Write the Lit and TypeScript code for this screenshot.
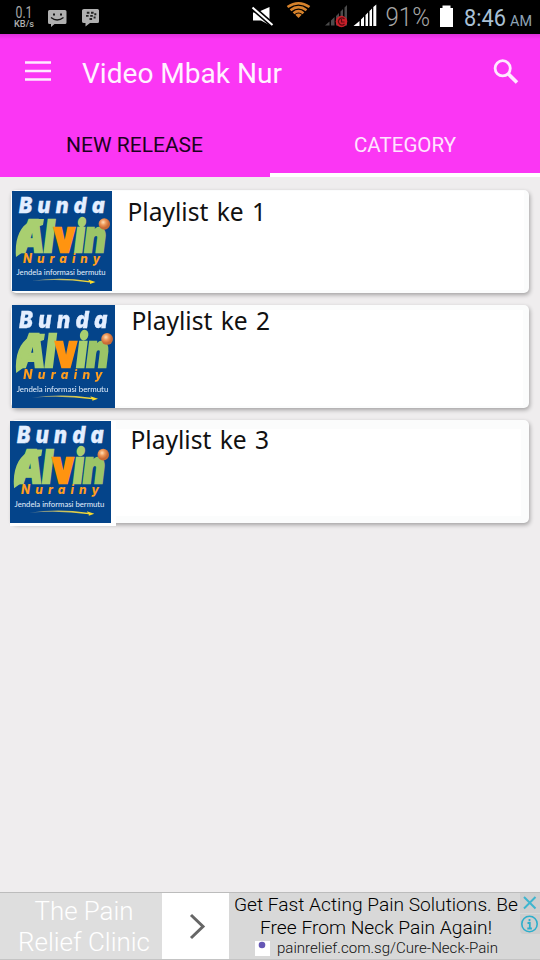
import { LitElement, html, css, svg } from "lit";
import { customElement, property } from "lit/decorators.js";
import { classMap } from "lit/directives/class-map.js";

/** Real text stretched to a known width, with its baseline at a known height. */
const fit = (x: number, y: number, w: number, cls: string, t: unknown) =>
  svg`<text class=${cls} x=${x} y=${y} textLength=${w} lengthAdjust="spacingAndGlyphs">${t}</text>`;

@customElement("channel-logo")
class ChannelLogo extends LitElement {
  static styles = css`
    :host { display: block; background: #04448a; }
    svg { display: block; width: 100%; height: 100%; }
    .bunda { font: italic 900 22px "Inter", "Lato", sans-serif; letter-spacing: 6px; fill: #e3eeff; stroke: #e3eeff; stroke-width: .3; }
    .alvin { font: italic 900 44px "Inter", "Lato", sans-serif; fill: #a9cf70; stroke: #a9cf70; stroke-width: 2.4; }
    .alvin .v { fill: #ff9410; stroke: #ff9410; font-style: normal; }
    .alvin .n { fill: #9bc467; stroke: #9bc467; }
    .nur { font: italic 800 12.5px "Inter", "Lato", sans-serif; letter-spacing: 5.5px; fill: #ff9d20; }
    .tag { font: 400 7.8px "Lato", sans-serif; fill: #e3effd; }
  `;
  render() {
    return html`<svg viewBox="0 0 100 100" preserveAspectRatio="none">
      <defs>
        <radialGradient id="ball" cx=".4" cy=".35"><stop offset="0" stop-color="#ffe0b8"/><stop offset=".5" stop-color="#ee9758"/><stop offset="1" stop-color="#c96a35"/></radialGradient>
        <linearGradient id="sw"><stop offset="0" stop-color="#57789b"/><stop offset=".5" stop-color="#c9c060"/><stop offset="1" stop-color="#ffdd25"/></linearGradient>
      </defs>
      ${fit(7, 22, 91, "bunda", "Bunda")}
      <path d="M4 66C2.500 48 8 36 17 31C21 28.500 26 28 32 28L31 34C19 37 12 48 11 61Z" fill="#a9cf70"/>
      ${fit(6, 60.5, 88, "alvin", svg`Al<tspan class="v">v</tspan>i<tspan class="n">n</tspan>`)}
      <circle cx="92.300" cy="33" r="5.700" fill="url(#ball)"/>
      ${fit(11, 72, 82, "nur", "Nurainy")}
      ${fit(4.5, 84, 89, "tag", "Jendela informasi bermutu")}
      <path d="M19 90Q47 85.500 77 90L76 88.500L83.500 91L78 93L78 91.500Q50 87.500 19 90Z" fill="url(#sw)"/>
    </svg>`;
  }
}

@customElement("playlist-card")
class PlaylistCard extends LitElement {
  @property({ type: Number }) index = 1;
  static styles = css`
    :host { display: block; }
    .card { display: flex; height: 103px; border-radius: 5px; background: #fbfcfc; box-shadow: 1px 2px 4px rgba(0,0,0,.32); }
    .logo { flex: none; width: 100px; height: 100px; margin: 1px 0 0 1px; }
    .body { flex: 1; margin: 1px 5px 3px 0; background: #fff; }
    svg { display: block; width: 200px; height: 48px; overflow: visible; }
    text { font: 25.5px "Noto Sans", sans-serif; word-spacing: 2px; fill: #111; }
    .second .logo { width: 103px; height: 103px; margin-top: 0; background: #04448a; overflow: hidden; }
    .second channel-logo { filter: blur(.7px); }
    .second .body { margin: 5px 6px 2px 0; }
    .third .logo { width: 101px; height: 102px; margin: 1px 0 -2px -1px; padding: 0 5px 3px 0; background: #fff; }
    .third .body { margin: 9px 8px 7px 0; }
    channel-logo { width: 100%; height: 100%; }
  `;
  render() {
    const i = this.index;
    const x = [0, 15.5, 16.5, 14.5][i];
    const y = [0, 29.5, 19.5, 20][i];
    return html`<div class=${classMap({ card: true, second: i === 2, third: i === 3 })}>
      <div class="logo"><channel-logo></channel-logo></div>
      <div class="body"><svg>${fit(x, y, 138.5, "", `Playlist ke ${i}`)}</svg></div>
    </div>`;
  }
}

@customElement("status-bar")
class StatusBar extends LitElement {
  static styles = css`
    :host { display: block; height: 34px; background: #000; }
    svg { display: block; }
    .net { font: 16px "Roboto", sans-serif; fill: #a8a8a8; }
    .unit { font: 500 9.5px "Roboto", sans-serif; fill: #b0b0b0; }
    .pct { font: 300 25px "Roboto", sans-serif; fill: #a6a6a6; }
    .clock { font: 24px "Roboto", sans-serif; fill: #a9c0d5; }
    .am { font: 15px "Roboto", sans-serif; fill: #8ea3b5; }
  `;
  render() {
    return html`<svg width="540" height="34">
      ${fit(15.5, 18, 17, "net", "0.1")}${fit(14, 27, 20, "unit", "KB/s")}
      <path fill="#b0b0b0" d="M49.500 10H65Q66.500 10 66.500 11.500V22.500Q66.500 24 65 24H54.500L51 27V24H49.500Q48 24 48 22.500V11.500Q48 10 49.500 10Z"/>
      <g fill="none" stroke="#161616" stroke-width="1.300"><path d="M51 17.500Q57 22.500 63.500 17.500"/><path d="M53 14.500h2M60 14.500h2" stroke-width="2"/></g>
      <path fill="#b0b0b0" d="M84 9H97.500Q99 9 99 10.500V21.500Q99 23 97.500 23H90L85.500 26.500V23H84Q82 23 82 21.500V10.500Q82 9 84 9Z"/>
      <path d="M86.800 12.700h2.600M91 12.700h2.600M86 15.900h2.600M90.200 15.900h2.600M89.500 19h2.600M94.300 14.300h2M93.600 17.500h2" stroke="#222" stroke-width="1.900"/>
      <path fill="#fff" d="M253 12.500H257L269.500 7V25L261 20.500H253Z"/>
      <path d="M252.500 7.500L272.500 25" stroke="#000" stroke-width="5"/><path d="M252.500 7.500L272.500 25" stroke="#fff" stroke-width="2"/>
      <g fill="none" stroke="#d6822b" stroke-width="2.600"><path d="M287.500 7Q298.500 -.5 309.500 7"/><path d="M290.500 10.200Q298.500 4 306.500 10.200"/><path d="M293.500 13.200Q298.500 9 303.500 13.200"/></g><path d="M295.300 14.800Q298.500 12.300 301.700 14.800L298.500 18Z" fill="#d6822b"/>
      <path fill="#4b4b4b" d="M325 25.500L329.500 21.500V25.500ZM331 20.500L334.500 17V25.500H331ZM336 16L339 13V25.500H336ZM340.500 11.500L343 9V25.500H340.500ZM344.500 7.500L347 5V25.500H344.500Z"/>
      <circle cx="341.500" cy="21.500" r="5.800" fill="#c9202a"/><path d="M344.500 19A3.500 3.500 0 1 0 344.500 24M341.500 19v3h3" fill="none" stroke="#5c0a10" stroke-width="1.200"/>
      <path fill="#fff" d="M353.500 26L359.500 21V26ZM361 19.500L364 16.500V26H361ZM365.500 15L368 12.500V26H365.500ZM369.500 11L372 8.500V26H369.500ZM373.300 7L376.300 4.500V26H373.300Z"/>
      ${fit(385.5, 26, 44.5, "pct", "91%")}
      <path fill="#fff" d="M440 8H442.500V5.500H450.500V8H453V27H440Z"/>
      ${fit(464, 26, 42, "clock", "8:46")}${fit(510, 26, 22, "am", "AM")}
    </svg>`;
  }
}

@customElement("ad-banner")
class AdBanner extends LitElement {
  static styles = css`
    :host { display: flex; height: 68px; box-sizing: border-box; border-top: 1px solid #bcbcbc; border-bottom: 1px solid #c4c4c4; background: #d8d8d8; }
    svg { display: block; }
    .brand { flex: none; width: 162px; background: #dedede; }
    .go { flex: none; width: 67px; background: #fff; }
    .copy { flex: 1; }
    .big { font: 300 26px "Roboto", sans-serif; fill: #fff; }
    .line { font: 300 19px "Roboto", sans-serif; fill: #000; }
    .url { font: 300 14.500px "Roboto", sans-serif; fill: #111; }
  `;
  render() {
    return html`
      <div class="brand"><svg width="162" height="66">${fit(34.5, 27, 99, "big", "The Pain")}${fit(18, 58, 132, "big", "Relief Clinic")}</svg></div>
      <div class="go"><svg width="67" height="66"><path d="M29 22L41 33.500L29 45" fill="none" stroke="#666" stroke-width="3"/></svg></div>
      <div class="copy"><svg width="311" height="66" viewBox="229 893 311 66">
        ${fit(234, 911, 284, "line", "Get Fast Acting Pain Solutions. Be")}
        ${fit(260, 934, 232, "line", "Free From Neck Pain Again!")}
        <rect x="255" y="941" width="15" height="15" fill="#fff"/><circle cx="262" cy="945" r="3.300" fill="#6557b5"/>
        ${fit(277, 953, 221, "url", "painrelief.com.sg/Cure-Neck-Pain")}
        <rect x="520" y="893" width="20" height="20" fill="#cecece"/><path d="M524 897L535.500 908.500M535.500 897L524 908.500" stroke="#3eb5cf" stroke-width="2"/>
        <path d="M520 914h20v20h-16q-4 0-4-4z" fill="#cecece"/><circle cx="529.500" cy="924" r="7.700" fill="none" stroke="#2eaecb" stroke-width="1.600"/>
        <path d="M529.500 919v2.200M527.500 923h2.300v5.500M527.300 928.500h4.600" fill="none" stroke="#2eaecb" stroke-width="1.800"/>
      </svg></div>`;
  }
}

@customElement("app-root")
class AppRoot extends LitElement {
  static styles = css`
    :host { display: flex; flex-direction: column; width: 540px; height: 960px; background: #efedee; overflow: hidden; }
    svg { display: block; }
    .bar { height: 78px; background: linear-gradient(#dc30d8, #fb36f4 5px); }
    .title { font: 27px "Roboto", sans-serif; fill: #fff2ff; }
    .tabs { display: flex; height: 65px; background: #fb36f4; }
    .tab { width: 50%; box-sizing: border-box; height: 65px; }
    .active { border-bottom: 4px solid #fff; }
    .on { font: 20px "Roboto", sans-serif; fill: #1c0320; }
    .off { font: 20px "Roboto", sans-serif; fill: #ffe4ff; }
    .list { flex: 1; display: flex; flex-direction: column; gap: 12px; padding: 13px 11px 0; }
  `;
  render() {
    return html`
      <status-bar></status-bar>
      <div class="bar"><svg width="540" height="78">
        <path d="M25 28.500H51M25 37H51M25 45.500H51" stroke="#ffe9ff" stroke-width="2.600"/>
        ${fit(82, 48.5, 200, "title", "Video Mbak Nur")}
        <circle cx="502.700" cy="34.300" r="7.600" fill="none" stroke="#ffe9ff" stroke-width="2.800"/>
        <path d="M508 39.600L517 48.500" stroke="#ffe9ff" stroke-width="3.600"/>
      </svg></div>
      <div class="tabs">
        <div class="tab"><svg width="270" height="61">${fit(66, 40, 137, "on", "NEW RELEASE")}</svg></div>
        <div class="tab active"><svg width="270" height="61">${fit(84, 40, 102, "off", "CATEGORY")}</svg></div>
      </div>
      <div class="list">${[1, 2, 3].map((n) => html`<playlist-card .index=${n}></playlist-card>`)}</div>
      <ad-banner></ad-banner>`;
  }
}
